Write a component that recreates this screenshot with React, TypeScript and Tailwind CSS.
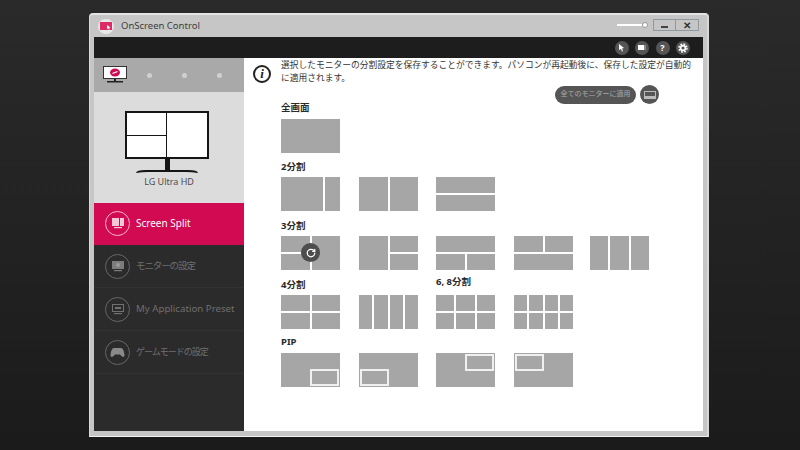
import { RotateCw } from 'lucide-react'

const CJK = 'font-["Noto_Sans","Noto_Sans_CJK_JP",sans-serif]'

// each thumb is a nested split, numbers are flex weights of plain cells
type Layout = { dir: 'row' | 'col'; parts: (number | Layout)[] }

function Split({ layout }: { layout: Layout }) {
  return (
    <div className={`flex h-full w-full gap-[2px] ${layout.dir === 'row' ? 'flex-row' : 'flex-col'}`}>
      {layout.parts.map((part, i) =>
        typeof part === 'number' ? (
          <div key={i} className="bg-[#a6a6a6]" style={{ flexGrow: part, flexBasis: 0 }} />
        ) : (
          <div key={i} className="flex-1">
            <Split layout={part} />
          </div>
        ),
      )}
    </div>
  )
}

const row = (...parts: (number | Layout)[]): Layout => ({ dir: 'row', parts })
const col = (...parts: (number | Layout)[]): Layout => ({ dir: 'col', parts })

function Thumb({ layout, children }: { layout: Layout; children?: React.ReactNode }) {
  return (
    <div className="relative h-[34px] w-[59px] shrink-0">
      <Split layout={layout} />
      {children}
    </div>
  )
}

function Pip({ corner }: { corner: string }) {
  return (
    <div className="relative h-[34px] w-[59px] shrink-0 bg-[#a6a6a6]">
      <div className={`absolute h-[17px] w-[29px] border-2 border-[#f0f0f0] ${corner}`} />
    </div>
  )
}

function Label({ children, className = '' }: { children: React.ReactNode; className?: string }) {
  return <div className={`h-[16px] text-[9.5px] leading-[16px] font-bold whitespace-nowrap text-[#2a2a2a] ${className}`}>{children}</div>
}

function ThumbRow({ children }: { children: React.ReactNode }) {
  return <div className="grid grid-cols-[78px_77px_78px_76px_59px]">{children}</div>
}

function NavItem({ label, size, active, icon }: { label: string; size: string; active?: boolean; icon: React.ReactNode }) {
  return (
    <div className={`flex items-center gap-[6px] border-b pl-[11px] ${active ? 'h-[42px] border-transparent bg-[#d10a52] text-white' : 'h-[43px] border-[#323232] text-[#6f6f6f]'}`}>
      <div className={`flex h-[25px] w-[25px] items-center justify-center rounded-full border ${active ? 'border-[#f3b6cc]' : 'border-[#666]'}`}>
        {icon}
      </div>
      <span className={`whitespace-nowrap ${size}`}>{label}</span>
    </div>
  )
}

function TopIcon({ children }: { children: React.ReactNode }) {
  return <div className="flex h-[14px] w-[14px] items-center justify-center rounded-full bg-[#555] text-white">{children}</div>
}

export default function App() {
  return (
    <div className={`h-[450px] w-[800px] overflow-hidden bg-gradient-to-b from-[#2a2a2a] to-[#1b1b1b] pt-[13px] pl-[89px] ${CJK}`}>
      <div className="flex h-[424px] w-[620px] flex-col rounded-t-[4px] border-t-2 border-r-2 border-b border-l border-t-[#e4e4e4] border-r-[#d8d8d8] border-b-[#f0f0f0] border-l-[#d8d8d8] bg-[#c6c6c6] px-[4px] pb-[5px]">
        {/* title bar */}
        <div className="flex h-[22px] shrink-0 items-center pl-[4px]">
          <div className="flex h-[15px] w-[16px] items-center justify-center rounded-full bg-[#e8e8e8]">
            <svg width="12" height="9" viewBox="0 0 12 9">
              <rect width="12" height="8" fill="#dc2a62" />
              <path d="M7 3l3.500 2.500-1.500.3.700 1.500-.8.4-.7-1.500L7 7z" fill="#fff" />
            </svg>
          </div>
          <span className="ml-[7px] text-[9.5px] text-[#3d3d3d]">OnScreen Control</span>
          <div className="mt-[-3px] ml-auto flex items-center">
            <div className="h-[2px] w-[25px] bg-white" />
            <div className="h-[6px] w-[6px] rounded-full border border-[#999] bg-white" />
            <div className="ml-[5px] flex h-[12px] w-[23px] items-end justify-center border border-[#8f9a9f] pb-[2px]">
              <div className="h-[2px] w-[7px] bg-[#444]" />
            </div>
            <div className="flex h-[12px] w-[23px] items-center justify-center border border-l-0 border-[#8f9a9f] text-[10px] leading-none font-bold text-[#333]">✕</div>
            <div className="w-[4px]" />
          </div>
        </div>

        {/* toolbar */}
        <div className="flex h-[21px] shrink-0 items-center justify-end gap-[6.5px] bg-[#1d1d1d] pr-[13px]">
          <TopIcon>
            <svg width="7" height="8" viewBox="0 0 7 8"><path d="M1 0l5 4-2 .5 1 2.500-1 .5-1-2.500L1 6z" fill="#fff" /></svg>
          </TopIcon>
          <TopIcon>
            <div className="h-[5px] w-[8px] border-r-2 border-[#888] bg-white" />
          </TopIcon>
          <TopIcon><span className="text-[9px] leading-none font-bold">?</span></TopIcon>
          <TopIcon>
            <svg width="10" height="10" viewBox="0 0 10 10" fill="none" stroke="#fff">
              <circle cx="5" cy="5" r="2.400" strokeWidth="1.600" />
              <circle cx="5" cy="5" r="4" strokeWidth="1.400" strokeDasharray="1.800 1.340" />
            </svg>
          </TopIcon>
        </div>

        <div className="flex min-h-0 flex-1">
          {/* sidebar */}
          <div className="flex w-[150px] shrink-0 flex-col bg-[#2b2b2b]">
            <div className="flex h-[34px] items-center bg-[#a9a9a9] pl-[9px]">
              <svg width="24" height="18" viewBox="0 0 24 18">
                <rect x="0.5" y="0.5" width="23" height="12" fill="#fff" stroke="#333" />
                <ellipse cx="12" cy="6.5" rx="5" ry="4" fill="#d10a52" />
                <path d="M9.500 7.500l5-2" stroke="#fff" strokeWidth="1.2" />
                <rect x="11" y="13" width="2" height="2" fill="#222" />
                <rect x="4" y="15" width="16" height="1.500" fill="#222" />
              </svg>
              <div className="ml-[20px] flex gap-[30px]">
                <div className="h-[5px] w-[5px] rounded-full bg-[#d0d0d0]" />
                <div className="h-[5px] w-[5px] rounded-full bg-[#d0d0d0]" />
                <div className="h-[5px] w-[5px] rounded-full bg-[#d0d0d0]" />
              </div>
            </div>

            <div className="flex h-[111px] flex-col items-center bg-[#dcdcdc] pt-[19px]">
              <div className="mr-[5px] flex flex-col items-center">
                <div className="flex h-[48px] w-[84px] gap-[1px] border-2 border-[#151515] bg-[#151515]">
                  <div className="flex w-[39px] flex-col gap-[1px]">
                    <div className="flex-1 bg-white" />
                    <div className="flex-1 bg-white" />
                  </div>
                  <div className="flex-1 bg-white" />
                </div>
                <svg width="64" height="15" viewBox="0 0 64 15">
                  <rect x="30" y="0" width="5" height="11" fill="#151515" />
                  <path d="M1 14q0-3 10-3h42q10 0 10 3q-6-1-12-1H13q-6 0-12 1z" fill="#151515" />
                </svg>
              </div>
              <div className="mt-[1px] text-[9px] leading-[13px] text-[#4c4c4c]">LG Ultra HD</div>
            </div>

            <NavItem
              label="Screen Split"
              size="text-[10px]"
              active
              icon={
                <svg width="14" height="13" viewBox="0 0 14 13">
                  <rect x="1" y="1" width="12" height="8" fill="#f5c6d6" />
                  <rect x="8" y="1" width="1" height="8" fill="#d10a52" />
                  <rect x="3" y="10" width="8" height="1.200" fill="#f5c6d6" />
                </svg>
              }
            />
            <NavItem
              label="モニターの設定"
              size="text-[9.5px] tracking-[-1.1px]"
              icon={
                <svg width="14" height="13" viewBox="0 0 14 13">
                  <rect x="1" y="1" width="12" height="8" fill="#7c7c7c" />
                  <circle cx="7" cy="5" r="2" fill="#999" />
                  <rect x="3" y="10" width="8" height="1.200" fill="#7c7c7c" />
                </svg>
              }
            />
            <NavItem
              label="My Application Preset"
              size="text-[9.7px]"
              icon={
                <svg width="14" height="13" viewBox="0 0 14 13">
                  <rect x="1.500" y="1.500" width="11" height="7" fill="none" stroke="#707070" />
                  <rect x="4" y="4" width="6" height="2" fill="#707070" />
                  <rect x="3" y="10" width="8" height="1.200" fill="#707070" />
                </svg>
              }
            />
            <NavItem
              label="ゲームモードの設定"
              size="text-[9px] tracking-[-1px]"
              icon={
                <svg width="15" height="11" viewBox="0 0 15 11">
                  <path d="M4 1h7c2 0 3 3 3.500 7 .2 2-1.500 2.500-3 1L10 7.500H5L3.500 9c-1.500 1.500-3.200 1-3-1C1 4 2 1 4 1z" fill="#8a8a8a" />
                </svg>
              }
            />
          </div>

          {/* content */}
          <div className="relative min-w-0 flex-1 bg-white pl-[37px]">
            <div className="absolute top-[7px] left-[9px] flex h-[18px] w-[18px] items-center justify-center rounded-full border-2 border-[#222] font-['Liberation_Serif',serif] text-[13px] font-bold text-[#222] italic">
              i
            </div>
            <div className="h-[42px] pt-[1px] text-[8.75px] leading-[13px] whitespace-nowrap text-[#333]">
              選択したモニターの分割設定を保存することができます。パソコンが再起動後に、保存した設定が自動的
              <br />
              に適用されます。
            </div>
            <div className="absolute top-[27px] left-[311px] flex items-center gap-[4px]">
              <div className="flex h-[18px] w-[81px] items-center justify-center rounded-full bg-[#555] text-[7px] whitespace-nowrap text-[#aaa]">全てのモニターに適用</div>
              <div className="flex h-[19px] w-[19px] items-center justify-center rounded-full bg-[#555]">
                <div className="flex h-[8px] w-[12px] flex-col justify-end border border-[#bbb]">
                  <div className="h-[2px] bg-[#bbb]" />
                </div>
              </div>
            </div>

            <Label className="mb-[3px]">全画面</Label>
            <Thumb layout={row(1)} />

            <Label className="mt-[6px] mb-[2px]">2分割</Label>
            <ThumbRow>
              <Thumb layout={row(42, 15)} />
              <Thumb layout={row(1, 1)} />
              <Thumb layout={col(1, 1)} />
            </ThumbRow>

            <Label className="mt-[7px] mb-[2px]">3分割</Label>
            <ThumbRow>
              <Thumb layout={row(col(1, 1), 1)}>
                <div className="absolute top-[7px] left-[20px] flex h-[19px] w-[19px] items-center justify-center rounded-full bg-[#4d4d4d] text-white">
                  <RotateCw size={10} strokeWidth={3} />
                </div>
              </Thumb>
              <Thumb layout={row(1, col(1, 1))} />
              <Thumb layout={col(1, row(1, 1))} />
              <Thumb layout={col(row(1, 1), 1)} />
              <Thumb layout={row(1, 1, 1)} />
            </ThumbRow>

            <div className="mt-[7px] mb-[2px] flex">
              <Label className="w-[155px]">4分割</Label>
              <Label className="-mt-[3px]">6, 8分割</Label>
            </div>
            <ThumbRow>
              <Thumb layout={col(row(1, 1), row(1, 1))} />
              <Thumb layout={row(1, 1, 1, 1)} />
              <Thumb layout={col(row(1, 1, 1), row(1, 1, 1))} />
              <Thumb layout={col(row(1, 1, 1, 1), row(1, 1, 1, 1))} />
            </ThumbRow>

            <Label className="mt-[5px] mb-[3px]">PIP</Label>
            <ThumbRow>
              <Pip corner="right-[1px] bottom-[1px]" />
              <Pip corner="left-[1px] bottom-[1px]" />
              <Pip corner="right-[1px] top-[1px]" />
              <Pip corner="left-[1px] top-[1px]" />
            </ThumbRow>
          </div>
        </div>
      </div>
    </div>
  )
}
